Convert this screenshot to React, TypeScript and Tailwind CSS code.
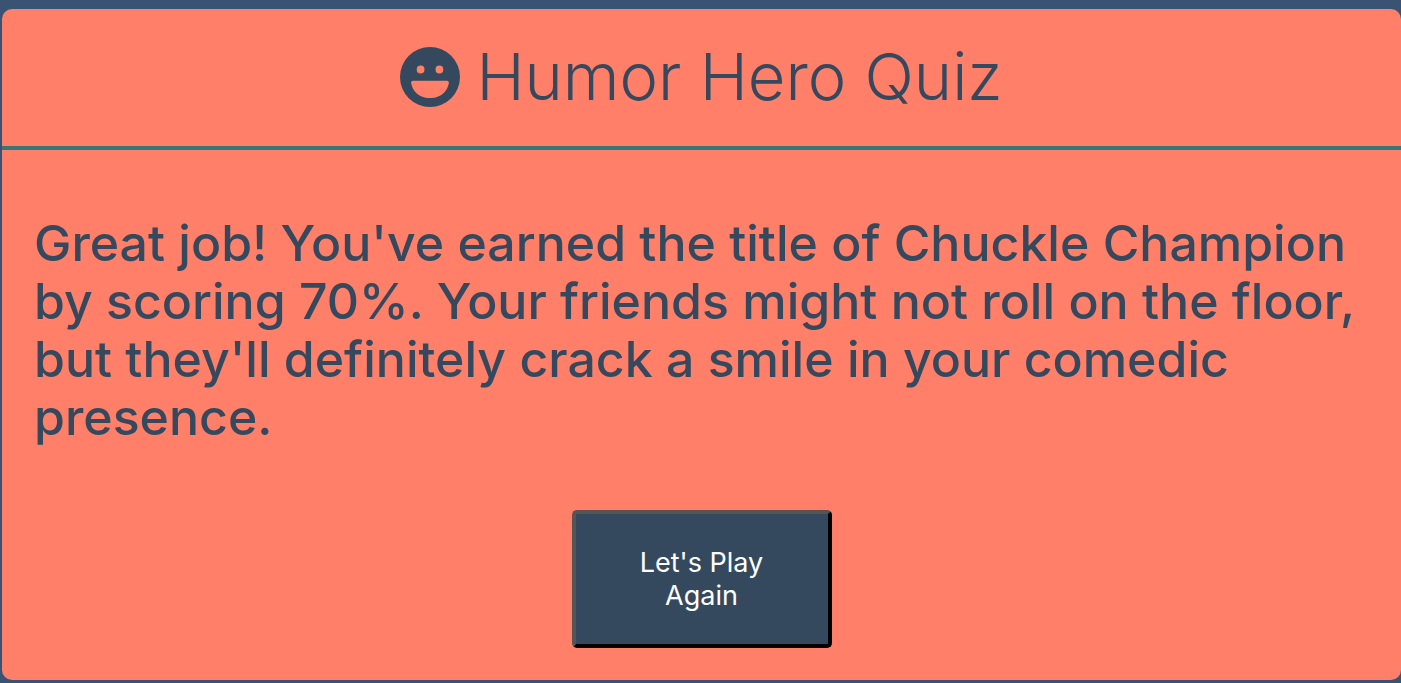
function LaughIcon() {
  return (
    <svg viewBox="0 0 60 60" className="size-[60px] shrink-0" fill="currentColor" aria-hidden="true">
      <path
        fillRule="evenodd"
        d="M30 0a30 30 0 1 1 0 60a30 30 0 0 1 0-60ZM20.6 18.6a3.9 3.9 0 1 0 0 7.8a3.9 3.9 0 0 0 0-7.8ZM39.4 18.6a3.9 3.9 0 1 0 0 7.8a3.9 3.9 0 0 0 0-7.8ZM13 33.7c-1.2 0-2.1 1-1.9 2.2C12.5 44.500 19.8 50.900 28.700 50.900H31.300C40.200 50.900 47.500 44.500 48.900 35.900c.2-1.200-.7-2.200-1.900-2.200Z"
      />
    </svg>
  );
}

export default function App() {
  return (
    <div className="min-h-screen bg-[#3a5373] pt-[9px] pb-[3px] pl-[2px] font-['Inter',sans-serif] text-[#34495e]">
      <main className="flex min-h-[671px] flex-col rounded-[10px] bg-[#ff7f68]">
        <header className="flex h-[141px] items-center justify-center gap-4 border-b-4 border-[#367777] pb-[2px]">
          <LaughIcon />
          <h1 className="text-[65px] leading-[72px] font-light">Humor Hero Quiz</h1>
        </header>
        <section className="flex flex-col items-center gap-16 px-8 pt-16 pb-8">
          <p className="w-full text-[50px] leading-[58px] font-medium">
            Great job! You've earned the title of Chuckle Champion by scoring 70%. Your friends might not roll on the
            floor, but they'll definitely crack a smile in your comedic presence.
          </p>
          <button
            type="button"
            className="h-[138px] w-[260px] rounded-[5px] border-4 border-t-[#555555] border-r-black border-b-black border-l-[#555555] bg-[#34495e] px-12 text-[27px] leading-[33px] text-white"
          >
            Let's Play Again
          </button>
        </section>
      </main>
    </div>
  );
}
